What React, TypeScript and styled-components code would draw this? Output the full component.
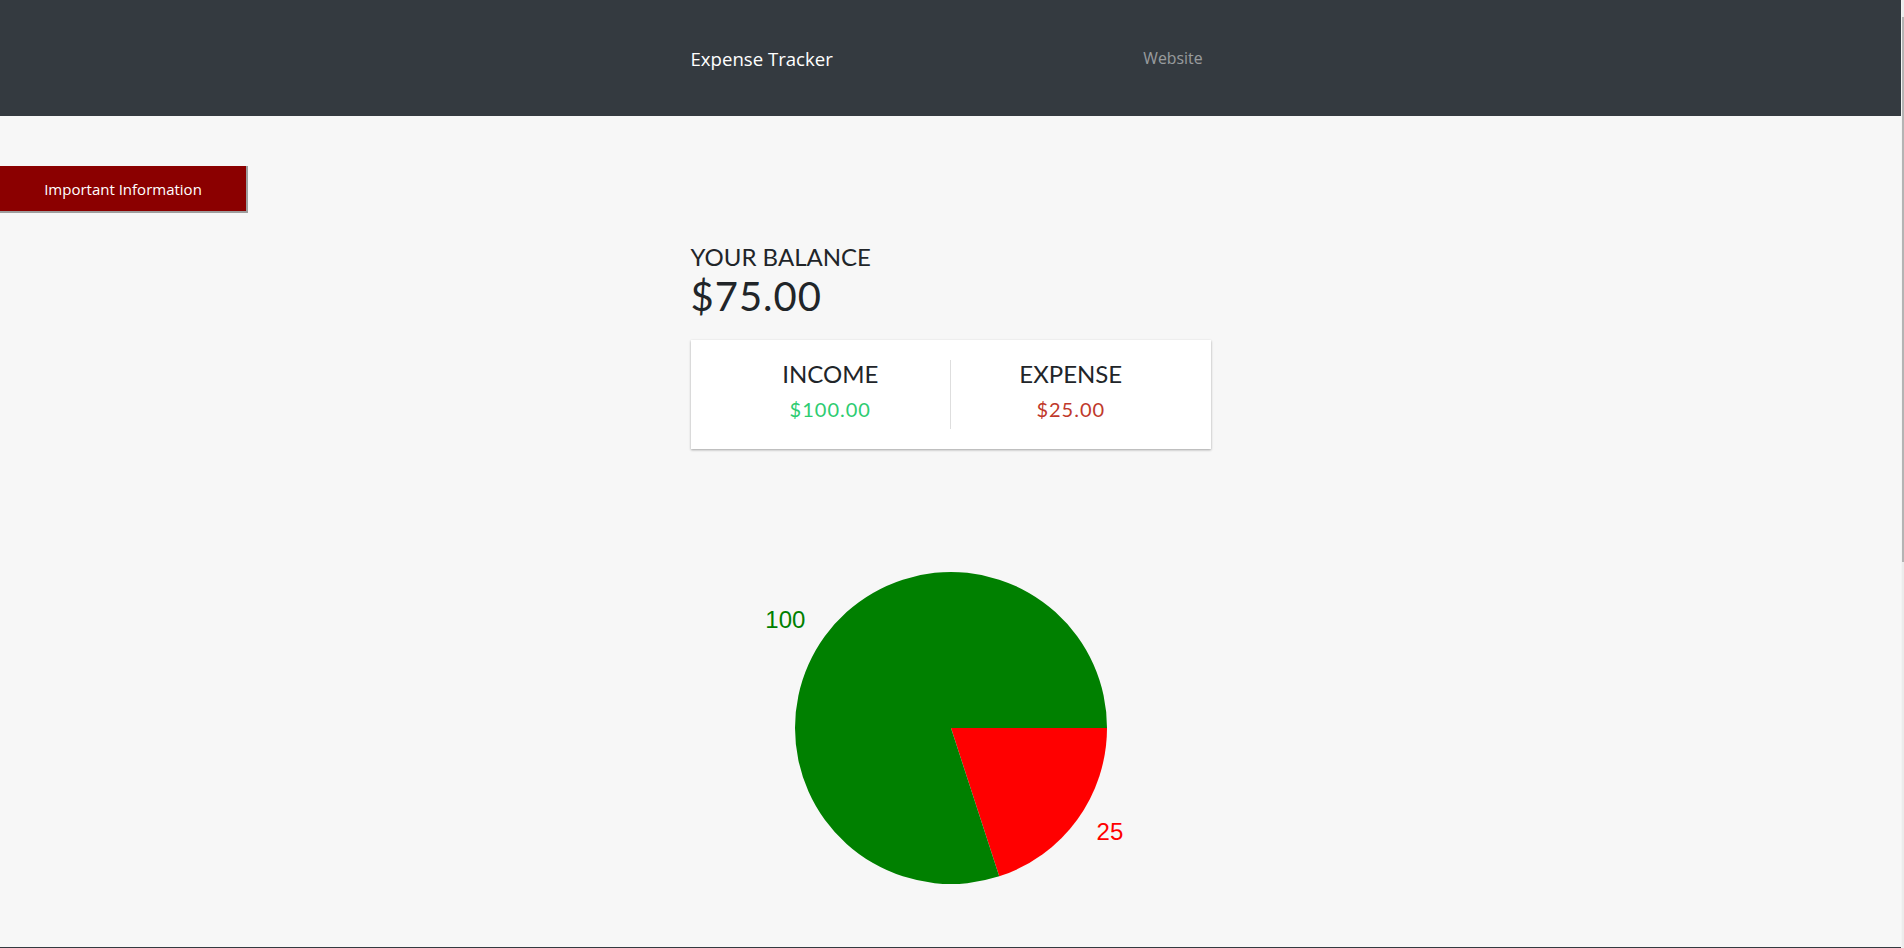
import React from "react";
import styled, { createGlobalStyle } from "styled-components";

const GlobalStyle = createGlobalStyle`
  html, body { margin: 0; padding: 0; }
  body {
    background: #f7f7f7;
    font-family: Lato, "Noto Sans", sans-serif;
    color: #212529;
    padding-right: 3px;
  }
  * { box-sizing: border-box; }
`;

const ScrollTrack = styled.div`
  position: fixed;
  top: 0;
  right: 0;
  width: 3px;
  height: 100vh;
  background: #ececec;
  border-left: 1px solid #f3f3f3;
  z-index: 10;
`;

const ScrollThumb = styled.div`
  margin-top: 17px;
  height: 545px;
  background: #b4b4b4;
`;

const NavBar = styled.nav`
  height: 116px;
  background: #343a40;
  display: flex;
  align-items: center;
`;

const NavInner = styled.div`
  width: 520px;
  margin: 0 auto;
  display: flex;
  align-items: center;
  justify-content: space-between;
`;

const Brand = styled.a`
  color: #fff;
  font-family: "Open Sans", "Noto Sans", sans-serif;
  font-size: 18.6px;
  text-decoration: none;
`;

const NavLink = styled.a`
  color: rgba(255, 255, 255, 0.5);
  font-family: "Open Sans", "Noto Sans", sans-serif;
  font-size: 15.8px;
  padding: 8px;
  text-decoration: none;
`;

const InfoButton = styled.button`
  display: block;
  margin-top: 50px;
  width: 248px;
  height: 47px;
  background: #8b0000;
  color: #fff;
  font-family: "Open Sans", "Noto Sans", sans-serif;
  font-size: 15px;
  border: 0;
  border-right: 2px solid #9e9e9e;
  border-bottom: 2px solid #9e9e9e;
  padding: 0;
  cursor: pointer;
`;

const Container = styled.div`
  width: 520px;
  margin: 30px auto 0;
`;

const Heading4 = styled.h4`
  margin: 0;
  font-size: 24px;
  font-weight: 400;
  line-height: 1.2;
  text-transform: uppercase;
`;

const Balance = styled.h1`
  margin: 0;
  font-size: 40px;
  font-weight: 400;
  line-height: 1.2;
  letter-spacing: 1px;
`;

const Card = styled.div`
  background: #fff;
  box-shadow: 0 1px 3px rgba(0, 0, 0, 0.12), 0 1px 2px rgba(0, 0, 0, 0.24);
  padding: 20px;
  display: flex;
  margin-top: 20px;
`;

const Half = styled.div<{ $divider?: boolean }>`
  flex: 1;
  text-align: center;
  border-right: ${(p) => (p.$divider ? "1px solid #dedede" : "none")};
`;

const Money = styled.p<{ $plus?: boolean }>`
  margin: 5px 0;
  font-size: 20px;
  line-height: 1.5;
  letter-spacing: 1px;
  color: ${(p) => (p.$plus ? "#2ecc71" : "#c0392b")};
`;

const ChartWrap = styled.div`
  display: flex;
  justify-content: center;
  margin-top: 79px;
`;

const Footer = styled.footer`
  margin-top: 19px;
  height: 700px;
  background: #343a40;
`;

type Slice = { value: number; color: string };

const data: Slice[] = [
  { value: 25, color: "#ff0000" },
  { value: 100, color: "#008000" },
];

function PieChart() {
  const cx = 200;
  const cy = 200;
  const r = 156;
  const lr = 180;
  const total = data.reduce((s, d) => s + d.value, 0);
  let start = 0;
  const slices = data.map((d) => {
    const angle = (d.value / total) * 360;
    const end = start + angle;
    const a0 = (start * Math.PI) / 180;
    const a1 = (end * Math.PI) / 180;
    const mid = ((start + end) / 2) * (Math.PI / 180);
    const x0 = cx + r * Math.cos(a0);
    const y0 = cy + r * Math.sin(a0);
    const x1 = cx + r * Math.cos(a1);
    const y1 = cy + r * Math.sin(a1);
    const large = angle > 180 ? 1 : 0;
    const path = `M${cx},${cy} L${x0},${y0} A${r},${r} 0 ${large} 1 ${x1},${y1} Z`;
    const lx = cx + lr * Math.cos(mid);
    const ly = cy + lr * Math.sin(mid) - 2.5;
    start = end;
    return { ...d, path, lx, ly, anchor: Math.cos(mid) >= 0 ? "start" : "end" };
  });
  return (
    <svg width={400} height={400} viewBox="0 0 400 400">
      {slices.map((s, i) => (
        <path key={i} d={s.path} fill={s.color} />
      ))}
      {slices.map((s, i) => (
        <text
          key={`t${i}`}
          x={s.lx}
          y={s.ly}
          fill={s.color}
          textAnchor={s.anchor as "start" | "end"}
          dominantBaseline="central"
          fontFamily='"Liberation Sans", Arial, sans-serif'
          fontSize={24}
        >
          {s.value}
        </text>
      ))}
    </svg>
  );
}

export default function App() {
  return (
    <>
      <GlobalStyle />
      <ScrollTrack>
        <ScrollThumb />
      </ScrollTrack>
      <NavBar>
        <NavInner>
          <Brand href="#">Expense Tracker</Brand>
          <NavLink href="#">Website</NavLink>
        </NavInner>
      </NavBar>
      <InfoButton>Important Information</InfoButton>
      <Container>
        <Heading4>Your Balance</Heading4>
        <Balance>$75.00</Balance>
        <Card>
          <Half $divider>
            <Heading4>Income</Heading4>
            <Money $plus>$100.00</Money>
          </Half>
          <Half>
            <Heading4>Expense</Heading4>
            <Money>$25.00</Money>
          </Half>
        </Card>
        <ChartWrap>
          <PieChart />
        </ChartWrap>
      </Container>
      <Footer />
    </>
  );
}
